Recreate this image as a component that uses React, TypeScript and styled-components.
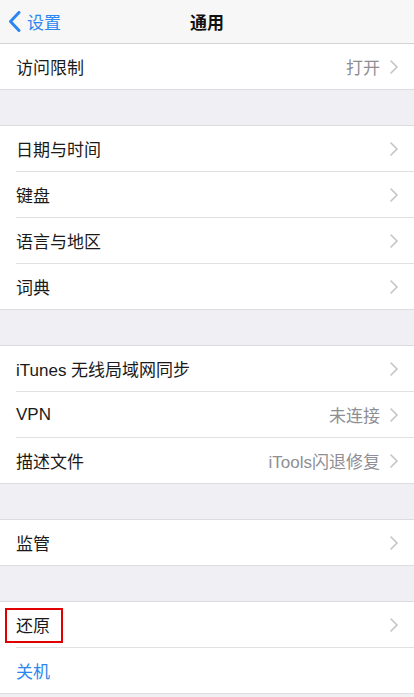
import styled, { createGlobalStyle } from "styled-components";

const GlobalStyle = createGlobalStyle`
    html, body {
        margin: 0;
        padding: 0;
        background: #efeff4;
    }
    body {
        font-family: "Noto Sans CJK SC", "Noto Sans", "Liberation Sans", sans-serif;
        -webkit-font-smoothing: antialiased;
    }
`

interface IRow {
    title: string
    value?: string
    action?: boolean
    highlighted?: boolean
}

const groups: IRow[][] = [
    [{ title: "访问限制", value: "打开" }],
    [
        { title: "日期与时间" },
        { title: "键盘" },
        { title: "语言与地区" },
        { title: "词典" },
    ],
    [
        { title: "iTunes 无线局域网同步" },
        { title: "VPN", value: "未连接" },
        { title: "描述文件", value: "iTools闪退修复" },
    ],
    [{ title: "监管" }],
    [
        { title: "还原", highlighted: true },
        { title: "关机", action: true },
    ],
]

const Page = styled.div`
    width: 414px;
    height: 697px;
    overflow: hidden;
    background: #efeff4;
    display: flex;
    flex-direction: column;
`

const NavBar = styled.div`
    height: 43px;
    flex-shrink: 0;
    background: #f7f7f7;
    border-bottom: 1px solid #d3d3d7;
    display: grid;
    grid-template-columns: 1fr auto 1fr;
    align-items: center;
`

const BackButton = styled.div`
    display: flex;
    align-items: center;
    gap: 6px;
    padding-left: 8px;
    color: #2b86f0;
    font-size: 17px;
`

const NavTitle = styled.div`
    font-size: 17px;
    font-weight: 700;
    color: #111;
`

const Group = styled.div<{ first?: boolean }>`
    background: #fff;
    border-top: ${props => props.first ? "none" : "1px solid #dcdce0"};
    border-bottom: 1px solid #dcdce0;
    margin-top: ${props => props.first ? "0" : "35px"};
    flex-shrink: 0;
`

const Row = styled.div<{ divider?: boolean }>`
    position: relative;
    height: 45px;
    margin-left: 16px;
    padding-right: 16px;
    border-top: ${props => props.divider ? "1px solid #e1e1e4" : "none"};
    display: flex;
    align-items: center;
`

const Title = styled.span<{ action?: boolean }>`
    flex: 1;
    font-size: 17px;
    color: ${props => props.action ? "#2b86f0" : "#1a1a1a"};
    font-family: "Liberation Sans", "Noto Sans CJK SC", sans-serif;
`

const Value = styled.span`
    font-size: 17px;
    color: #8e8e93;
    margin-right: 10px;
    font-family: "Liberation Sans", "Noto Sans CJK SC", sans-serif;
`

const Mark = styled.div`
    position: absolute;
    left: -11px;
    top: 6px;
    width: 54px;
    height: 31px;
    border: 2px solid #e00000;
    pointer-events: none;
`

function Chevron() {
    return <svg width="8" height="14" viewBox="0 0 8 14">
        <path d="M1 1l6 6-6 6" fill="none" stroke="#c4c4c8" strokeWidth="1.6" strokeLinecap="round" strokeLinejoin="round" />
    </svg>
}

function BackChevron() {
    return <svg width="13" height="21" viewBox="0 0 13 21">
        <path d="M11 1.5L2.5 10.5 11 19.5" fill="none" stroke="#2b86f0" strokeWidth="3" strokeLinecap="round" strokeLinejoin="round" />
    </svg>
}

export default function App() {
    return <Page>
        <GlobalStyle />
        <NavBar>
            <BackButton>
                <BackChevron />
                设置
            </BackButton>
            <NavTitle>通用</NavTitle>
            <div />
        </NavBar>
        {groups.map((rows, g) =>
            <Group key={g} first={g === 0}>
                {rows.map((row, i) =>
                    <Row key={i} divider={i > 0}>
                        {row.highlighted && <Mark />}
                        <Title action={row.action}>{row.title}</Title>
                        {row.value && <Value>{row.value}</Value>}
                        {!row.action && <Chevron />}
                    </Row>
                )}
            </Group>
        )}
    </Page>
}
